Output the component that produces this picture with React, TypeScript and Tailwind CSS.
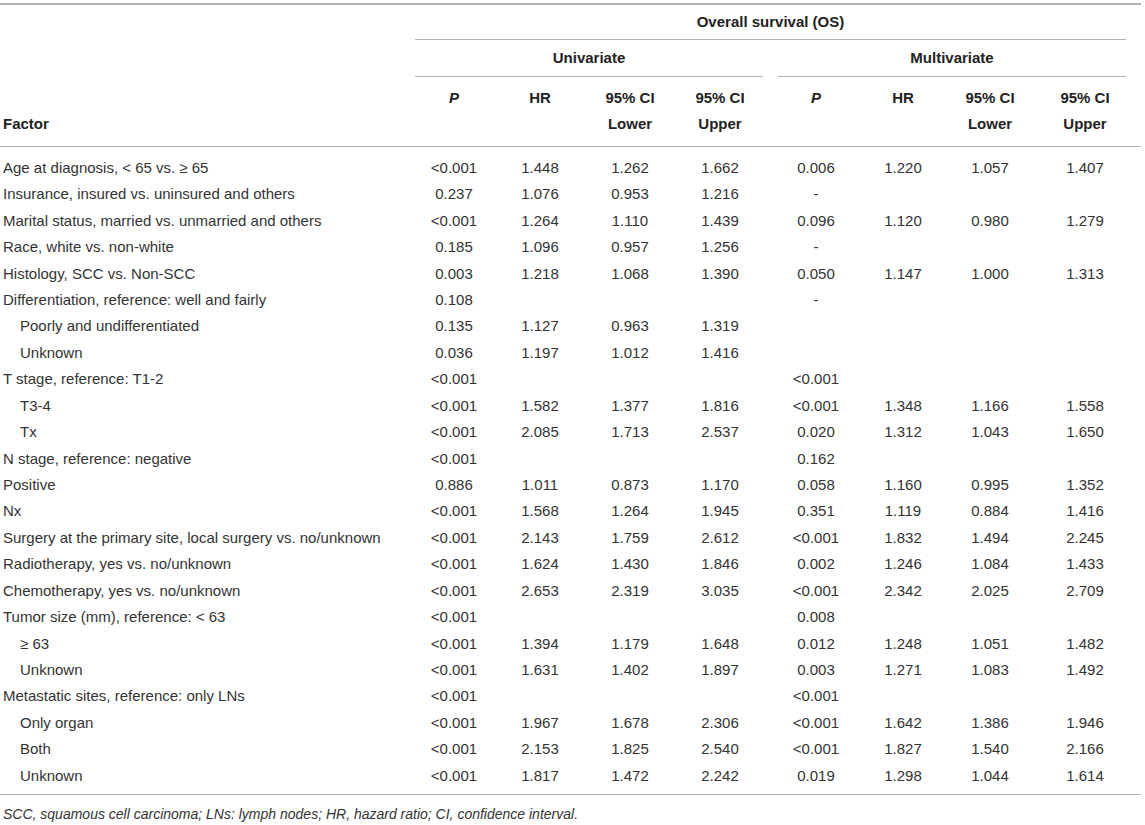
import React from "react";

type Row = { f: string; indent?: boolean; u: string[]; m: string[] };

const rows: Row[] = [
  { f: "Age at diagnosis, < 65 vs. ≥ 65", u: ["<0.001", "1.448", "1.262", "1.662"], m: ["0.006", "1.220", "1.057", "1.407"] },
  { f: "Insurance, insured vs. uninsured and others", u: ["0.237", "1.076", "0.953", "1.216"], m: ["-", "", "", ""] },
  { f: "Marital status, married vs. unmarried and others", u: ["<0.001", "1.264", "1.110", "1.439"], m: ["0.096", "1.120", "0.980", "1.279"] },
  { f: "Race, white vs. non-white", u: ["0.185", "1.096", "0.957", "1.256"], m: ["-", "", "", ""] },
  { f: "Histology, SCC vs. Non-SCC", u: ["0.003", "1.218", "1.068", "1.390"], m: ["0.050", "1.147", "1.000", "1.313"] },
  { f: "Differentiation, reference: well and fairly", u: ["0.108", "", "", ""], m: ["-", "", "", ""] },
  { f: "Poorly and undifferentiated", indent: true, u: ["0.135", "1.127", "0.963", "1.319"], m: ["", "", "", ""] },
  { f: "Unknown", indent: true, u: ["0.036", "1.197", "1.012", "1.416"], m: ["", "", "", ""] },
  { f: "T stage, reference: T1-2", u: ["<0.001", "", "", ""], m: ["<0.001", "", "", ""] },
  { f: "T3-4", indent: true, u: ["<0.001", "1.582", "1.377", "1.816"], m: ["<0.001", "1.348", "1.166", "1.558"] },
  { f: "Tx", indent: true, u: ["<0.001", "2.085", "1.713", "2.537"], m: ["0.020", "1.312", "1.043", "1.650"] },
  { f: "N stage, reference: negative", u: ["<0.001", "", "", ""], m: ["0.162", "", "", ""] },
  { f: "Positive", u: ["0.886", "1.011", "0.873", "1.170"], m: ["0.058", "1.160", "0.995", "1.352"] },
  { f: "Nx", u: ["<0.001", "1.568", "1.264", "1.945"], m: ["0.351", "1.119", "0.884", "1.416"] },
  { f: "Surgery at the primary site, local surgery vs. no/unknown", u: ["<0.001", "2.143", "1.759", "2.612"], m: ["<0.001", "1.832", "1.494", "2.245"] },
  { f: "Radiotherapy, yes vs. no/unknown", u: ["<0.001", "1.624", "1.430", "1.846"], m: ["0.002", "1.246", "1.084", "1.433"] },
  { f: "Chemotherapy, yes vs. no/unknown", u: ["<0.001", "2.653", "2.319", "3.035"], m: ["<0.001", "2.342", "2.025", "2.709"] },
  { f: "Tumor size (mm), reference: < 63", u: ["<0.001", "", "", ""], m: ["0.008", "", "", ""] },
  { f: "≥ 63", indent: true, u: ["<0.001", "1.394", "1.179", "1.648"], m: ["0.012", "1.248", "1.051", "1.482"] },
  { f: "Unknown", indent: true, u: ["<0.001", "1.631", "1.402", "1.897"], m: ["0.003", "1.271", "1.083", "1.492"] },
  { f: "Metastatic sites, reference: only LNs", u: ["<0.001", "", "", ""], m: ["<0.001", "", "", ""] },
  { f: "Only organ", indent: true, u: ["<0.001", "1.967", "1.678", "2.306"], m: ["<0.001", "1.642", "1.386", "1.946"] },
  { f: "Both", indent: true, u: ["<0.001", "2.153", "1.825", "2.540"], m: ["<0.001", "1.827", "1.540", "2.166"] },
  { f: "Unknown", indent: true, u: ["<0.001", "1.817", "1.472", "2.242"], m: ["0.019", "1.298", "1.044", "1.614"] },
];

const cols = "grid grid-cols-[415px_78px_94px_86px_94px_11px_76px_98px_76px_114px]";

export default function App() {
  return (
    <div
      className="w-[1145px] h-[825px] bg-white text-[15px] text-[#333]"
      style={{ fontFamily: '"Liberation Sans", Arial, sans-serif' }}
    >
      <div className="pt-[3px] w-[1141px]">
        <div className="border-t-2 border-[#b3b3b3]" />
        {/* header row 1 */}
        <div className="flex">
          <div className="w-[415px]" />
          <div className="w-[711px] h-[35px] flex items-center justify-center font-bold text-[#222] border-b border-[#b3b3b3]">
            Overall survival (OS)
          </div>
        </div>
        {/* header row 2 */}
        <div className="flex">
          <div className="w-[415px]" />
          <div className="w-[348px] h-[37px] flex items-center justify-center font-bold text-[#222] border-b border-[#b3b3b3]">
            Univariate
          </div>
          <div className="w-[15px]" />
          <div className="w-[348px] h-[37px] flex items-center justify-center font-bold text-[#222] border-b border-[#b3b3b3]">
            Multivariate
          </div>
        </div>
        {/* header row 3 */}
        <div className={`${cols} border-b border-[#b3b3b3] font-bold text-[#222] pt-[8px] pb-[9px]`}>
          <div className="flex items-end pl-[3px] leading-[26px]">Factor</div>
          {["P", "HR", "95% CI|Lower", "95% CI|Upper"].map((h, i) => (
            <div key={"u" + i} className="flex flex-col items-center leading-[26px]">
              {h.split("|").map((t, j) => (
                <span key={j} className={t === "P" ? "italic" : ""}>{t}</span>
              ))}
            </div>
          ))}
          <div />
          {["P", "HR", "95% CI|Lower", "95% CI|Upper"].map((h, i) => (
            <div key={"m" + i} className="flex flex-col items-center leading-[26px]">
              {h.split("|").map((t, j) => (
                <span key={j} className={t === "P" ? "italic" : ""}>{t}</span>
              ))}
            </div>
          ))}
        </div>
        {/* body */}
        <div className="pt-[8px] pb-[5px] border-b border-[#b3b3b3]">
          {rows.map((r, i) => (
            <div key={i} className={`${cols} h-[26.43px] items-center`}>
              <div className={r.indent ? "pl-[20px]" : "pl-[3px]"}>{r.f}</div>
              {r.u.map((v, j) => (
                <div key={"u" + j} className="text-center">{v}</div>
              ))}
              <div />
              {r.m.map((v, j) => (
                <div key={"m" + j} className="text-center">{v}</div>
              ))}
            </div>
          ))}
        </div>
        <div className="pl-[3px] pt-[9px] italic text-[14px]">
          SCC, squamous cell carcinoma; LNs: lymph nodes; HR, hazard ratio; CI, confidence interval.
        </div>
      </div>
    </div>
  );
}
